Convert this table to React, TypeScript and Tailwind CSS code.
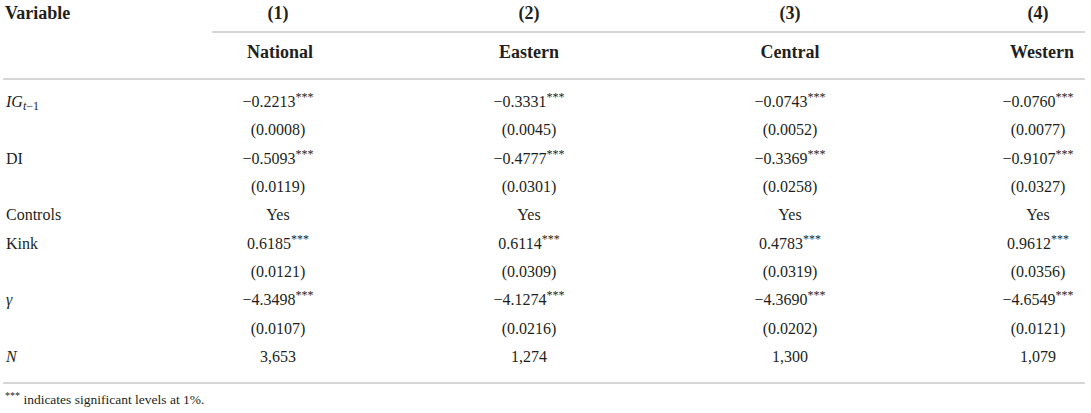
const rows = [
  { label: 'ig', values: ['−0.2213', '−0.3331', '−0.0743', '−0.0760'], stars: true },
  { label: '', values: ['(0.0008)', '(0.0045)', '(0.0052)', '(0.0077)'] },
  { label: 'DI', values: ['−0.5093', '−0.4777', '−0.3369', '−0.9107'], stars: true },
  { label: '', values: ['(0.0119)', '(0.0301)', '(0.0258)', '(0.0327)'] },
  { label: 'Controls', values: ['Yes', 'Yes', 'Yes', 'Yes'] },
  { label: 'Kink', values: ['0.6185', '0.6114', '0.4783', '0.9612'], stars: true },
  { label: '', values: ['(0.0121)', '(0.0309)', '(0.0319)', '(0.0356)'] },
  { label: 'gamma', values: ['−4.3498', '−4.1274', '−4.3690', '−4.6549'], stars: true },
  { label: '', values: ['(0.0107)', '(0.0216)', '(0.0202)', '(0.0121)'] },
  { label: 'N', values: ['3,653', '1,274', '1,300', '1,079'] },
];

const cols = ['col-start-2', 'col-start-4', 'col-start-6', 'col-start-8'];
const grid = 'grid grid-cols-[225px_100px_151px_100px_161px_100px_148px_100px]';

function Label({ name }: { name: string }) {
  if (name === 'ig')
    return (
      <span>
        <i>IG</i>
        <sub className="text-[12px] leading-none">
          <i>t</i>−1
        </sub>
      </span>
    );
  if (name === 'gamma') return <i>γ</i>;
  if (name === 'N') return <i>N</i>;
  return <span>{name}</span>;
}

export default function App() {
  return (
    <div className="w-[1091px] h-[413px] bg-white text-[#231f20] overflow-hidden font-['Liberation_Serif',serif]">
      <div className="ml-[3px] w-[1082px]">
        {/* header */}
        <div className={`${grid} h-[26px] items-center text-[18px] font-bold`}>
          <div className="pl-[2px]">Variable</div>
          {['(1)', '(2)', '(3)', '(4)'].map((h, i) => (
            <div key={h} className={`${cols[i]} text-center`}>
              {h}
            </div>
          ))}
        </div>
        <div className="mt-[5px] ml-[209px] h-[2px] bg-[#d6d6d6]" />
        <div className={`${grid} h-[38px] items-center text-[18px] font-bold`}>
          <div className="col-start-2 text-center pl-[4px]">National</div>
          <div className="col-start-4 text-center">Eastern</div>
          <div className="col-start-6 text-center">Central</div>
          <div className="col-start-8 text-center pl-[8px] whitespace-nowrap">Western</div>
        </div>
        <div className="mt-[7px] h-[2px] bg-[#d6d6d6]" />

        {/* body */}
        <div className="pt-[8px] text-[16px]">
          {rows.map((r, idx) => (
            <div key={idx} className={`${grid} h-[28.33px] items-center`}>
              <div className="pl-[3px]">
                <Label name={r.label} />
              </div>
              {r.values.map((v, i) => (
                <div key={i} className={`${cols[i]} text-center whitespace-nowrap`}>
                  {v}
                  {r.stars && <sup className="text-[12px] leading-none">***</sup>}
                </div>
              ))}
            </div>
          ))}
        </div>
        <div className="mt-[11px] h-[2px] bg-[#d6d6d6]" />
        <div className="mt-[9px] pl-[2px] text-[13.5px] leading-none">
          <sup className="text-[10px]">***</sup> indicates significant levels at 1%.
        </div>
      </div>
    </div>
  );
}
